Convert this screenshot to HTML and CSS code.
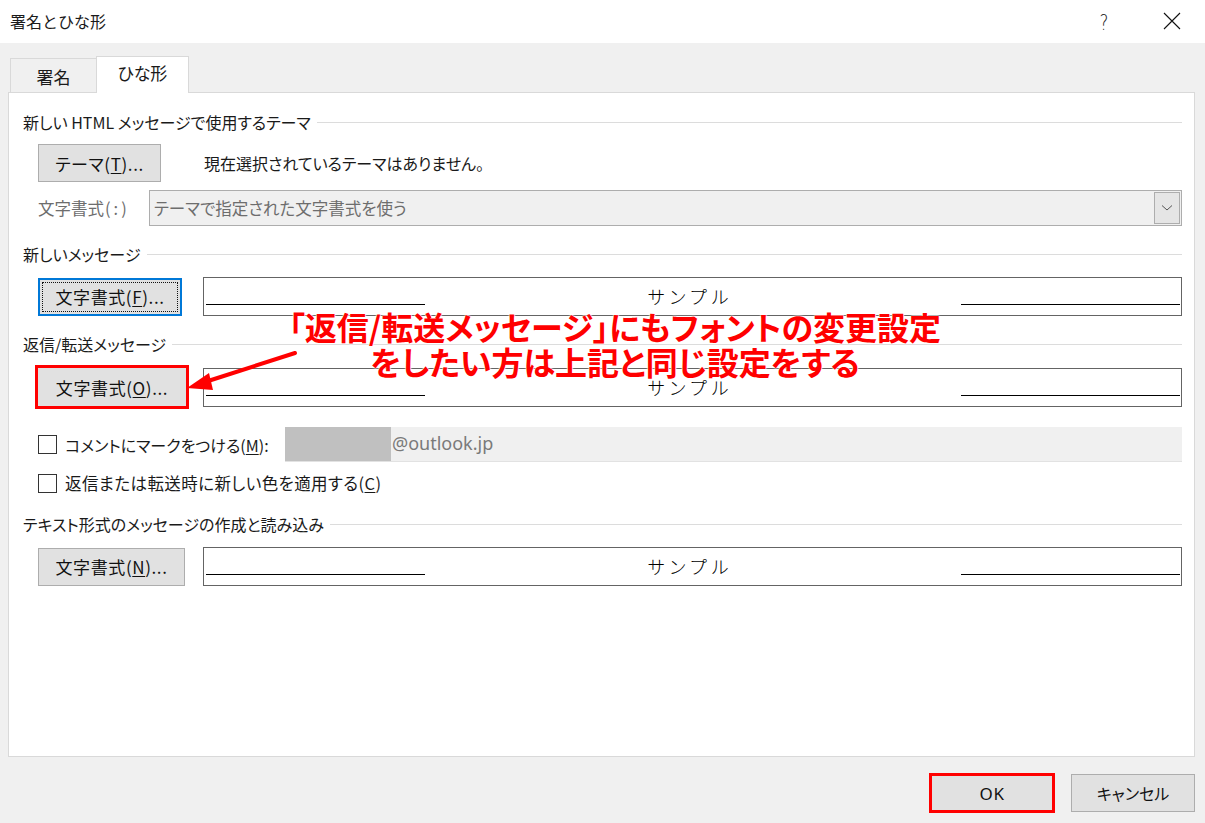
FILE: index.html
```html
<!DOCTYPE html>
<html lang="ja">
<head>
<meta charset="utf-8">
<title>署名とひな形</title>
<link rel="stylesheet" href="styles.css">
</head>
<body>
<div class="window">
  <div class="titlebar">
    <div class="title">署名とひな形</div>
    <div class="help">?</div>
    <div class="close">
      <svg width="18" height="18" viewBox="0 0 18 18"><path d="M1 1L17 17M17 1L1 17" stroke="#111" stroke-width="1.1" fill="none"/></svg>
    </div>
  </div>
  <div class="main">
    <div class="tabs">
      <div class="tab">署名</div>
      <div class="tab active">ひな形</div>
    </div>
    <div class="panel">
      <div class="group-title g1"><span>新しい HTML メッセージで使用するテーマ</span></div>
      <div class="row r-theme">
        <button class="btn btn-theme">テーマ(<u>T</u>)...</button>
        <div class="theme-text">現在選択されているテーマはありません。</div>
      </div>
      <div class="row r-font">
        <div class="disabled-label">文字書式<span class="paren">(:)</span></div>
        <div class="select">
          <span class="select-text">テーマで指定された文字書式を使う</span>
          <span class="select-btn"><svg width="12" height="8" viewBox="0 0 12 8"><path d="M1 1.5L6 6L11 1.5" stroke="#555" stroke-width="1" fill="none"/></svg></span>
        </div>
      </div>

      <div class="group-title g2"><span>新しいメッセージ</span></div>
      <div class="row r-sample">
        <button class="btn btn-font focused"><span class="focus-ring">文字書式(<u>F</u>)...</span></button>
        <div class="sample"><span class="sline"></span><span class="stext">サンプル</span><span class="sline"></span></div>
      </div>

      <div class="group-title g3"><span>返信/転送メッセージ</span></div>
      <div class="row r-sample">
        <button class="btn btn-font marked">文字書式(<u>O</u>)...</button>
        <div class="sample"><span class="sline"></span><span class="stext">サンプル</span><span class="sline"></span></div>
      </div>

      <div class="row r-check1">
        <span class="cbox"></span>
        <span class="clabel">コメントにマークをつける(<u>M</u>):</span>
        <div class="mark-input"><span class="mask"></span><span class="mail">@outlook.jp</span></div>
      </div>
      <div class="row r-check2">
        <span class="cbox"></span>
        <span class="clabel wide">返信または転送時に新しい色を適用する(<u>C</u>)</span>
      </div>

      <div class="group-title g4"><span>テキスト形式のメッセージの作成と読み込み</span></div>
      <div class="row r-sample r-last">
        <button class="btn btn-font">文字書式(<u>N</u>)...</button>
        <div class="sample"><span class="sline"></span><span class="stext">サンプル</span><span class="sline"></span></div>
      </div>

      <div class="annotation">
        <div class="note">
          <div>「返信/転送メッセージ」にもフォントの変更設定</div>
          <div>をしたい方は上記と同じ設定をする</div>
        </div>
        <svg class="arrow" width="130" height="50" viewBox="0 0 130 50">
          <path d="M112 5L22 34" stroke="#f00" stroke-width="4" fill="none" stroke-linecap="round"/>
          <path d="M4 40L26 25L30 42Z" fill="#f00"/>
        </svg>
      </div>
    </div>
    <div class="footer">
      <button class="btn btn-ok">OK</button>
      <button class="btn btn-cancel">キャンセル</button>
    </div>
  </div>
</div>
</body>
</html>
```

FILE: styles.css
```css
* { box-sizing: border-box; }
html, body { margin: 0; padding: 0; }
body {
  width: 1205px;
  height: 823px;
  overflow: hidden;
  background: #f0f0f0;
  font-family: "Noto Sans CJK JP", "Noto Sans", sans-serif;
  font-feature-settings: "palt";
  font-size: 16px;
  color: #1a1a1a;
}
.window { width: 1205px; height: 823px; display: flex; flex-direction: column; }
.titlebar {
  height: 43px;
  background: #fff;
  display: flex;
  align-items: center;
  padding-left: 10px;
}
.title { font-size: 16px; flex: 1; padding-bottom: 2px; font-feature-settings: normal; }
.help {
  width: 20px;
  text-align: center;
  font-size: 21px;
  line-height: 24px;
  font-family: "DejaVu Sans", sans-serif;
  font-weight: 300;
  color: #222;
  margin-right: 49px;
  margin-top: 2px;
  transform: scaleX(0.8);
}
.close { width: 18px; height: 18px; margin-right: 24px; margin-bottom: 2px; }
.close svg { display: block; }

.main { flex: 1; padding: 13px 10px 0 8px; display: flex; flex-direction: column; }
.tabs { display: flex; align-items: flex-end; height: 36px; padding-left: 2px; position: relative; z-index: 2; }
.tab {
  width: 86px;
  height: 34px;
  border: 1px solid #d9d9d9;
  border-bottom: none;
  border-right: none;
  display: flex;
  align-items: center;
  justify-content: center;
  font-size: 17px;
  background: #f0f0f0;
  padding-top: 2px;
}
.tab.active {
  width: 93px;
  height: 37px;
  background: #fff;
  border-right: 1px solid #d9d9d9;
  margin-bottom: -1px;
  padding-top: 0;
  padding-bottom: 5px;
}
.panel {
  position: relative;
  width: 1187px;
  height: 665px;
  background: #fff;
  border: 1px solid #d9d9d9;
  padding: 19px 12px 0 14px;
  display: flex;
  flex-direction: column;
}
.group-title {
  display: flex;
  align-items: center;
  height: 20px;
  line-height: 20px;
  white-space: nowrap;
}
.group-title::after {
  content: "";
  flex: 1;
  height: 1px;
  background: #dcdcdc;
  margin-left: 6px;
}
.g2, .g3 { margin-top: 18px; }
.g4 { margin-top: 19px; }

.row { display: grid; grid-template-columns: 165px 1fr; align-items: center; padding-left: 15px; }
.r-theme { margin-top: 12px; height: 38px; }
.r-font { margin-top: 8px; height: 36px; grid-template-columns: 111px 1fr; }
.r-sample { margin-top: 13px; height: 39px; }

.btn {
  font-family: "Noto Sans CJK JP", "Noto Sans", sans-serif;
  font-feature-settings: "palt";
  font-size: 17px;
  letter-spacing: 0.6px;
  color: #111;
  background: #e1e1e1;
  border: 1px solid #adadad;
  padding: 0;
  margin: 0;
  height: 38px;
  display: flex;
  align-items: center;
  justify-content: center;
}
.btn u { text-decoration-thickness: 1px; text-underline-offset: 2px; }
.btn-theme { width: 123px; }
.theme-text { padding-left: 1px; }
.btn-font { width: 147px; height: 38px; }
.btn-font.focused { width: 144px; border: 2px solid #0078d7; }
.focus-ring {
  display: flex;
  align-items: center;
  justify-content: center;
  width: calc(100% - 4px);
  height: calc(100% - 4px);
  border: 1px dotted #111;
}
.btn-font.marked {
  width: 150px;
  margin-left: -1px;
  outline: 3px solid #f00;
  outline-offset: -1px;
  height: 40px;
}

.disabled-label { color: #6d6d6d; font-size: 16.5px; }
.paren { letter-spacing: 3px; margin-left: 1px; }
.select {
  height: 36px;
  background: #f0f0f0;
  border: 1px solid #adadad;
  display: flex;
  align-items: center;
  padding: 0 1px 0 4px;
}
.select-text { flex: 1; color: #6d6d6d; font-size: 16.5px; }
.select-btn {
  width: 26px;
  height: 32px;
  background: #e5e5e5;
  border: 1px solid #adadad;
  display: flex;
  align-items: center;
  justify-content: center;
}

.sample {
  height: 39px;
  border: 1px solid #646464;
  display: flex;
  align-items: flex-start;
  padding: 0 1px 0 2px;
}
.sline { width: 219px; height: 1px; background: #000; margin-top: 26px; flex: none; }
.stext {
  flex: 1;
  text-align: center;
  font-size: 18px;
  letter-spacing: 5px;
  line-height: 22px;
  padding-top: 7px;
  padding-right: 5px;
  font-weight: 300;
  color: #000;
}

.r-check1 { display: flex; margin-top: 21px; height: 35px; }
.r-check2 { display: flex; margin-top: 9px; height: 24px; }
.cbox {
  width: 19px;
  height: 19px;
  border: 1px solid #333;
  background: #fff;
  flex: none;
  margin-right: 8px;
}
.clabel { white-space: nowrap; }
.clabel.wide { font-size: 16.5px; letter-spacing: 0.4px; }
.clabel u { text-decoration-thickness: 1px; text-underline-offset: 2px; }
.mark-input {
  margin-left: auto;
  width: 897px;
  height: 35px;
  background: #f0f0f0;
  border-bottom: 1px solid #e2e2e2;
  display: flex;
  align-items: stretch;
}
.mask { width: 106px; background: #c0c0c0; }
.mail {
  font-family: "Noto Sans", sans-serif;
  font-size: 18px;
  color: #7a7a7a;
  display: flex;
  align-items: center;
  padding-left: 1px;
  padding-bottom: 3px;
}

.footer {
  display: flex;
  justify-content: flex-end;
  gap: 16px;
  padding-top: 16px;
}
.btn-ok {
  width: 126px;
  height: 40px;
  border: 3px solid #f00;
  font-family: "Noto Sans", sans-serif;
  font-size: 17px;
}
.btn-cancel {
  width: 124px;
  height: 38px;
  margin-top: 1px;
  font-size: 16px;
  letter-spacing: 0;
}

.annotation { position: absolute; left: 0; top: 0; width: 100%; height: 100%; pointer-events: none; }
.note {
  position: absolute;
  left: 200px;
  top: 216px;
  width: 812px;
  text-align: center;
  color: #f00;
  font-weight: 700;
  font-size: 32px;
  line-height: 35px;
  text-shadow: 0 0 2px #fff, 0 0 2px #fff, 0 0 1px #fff;
}
.arrow { position: absolute; left: 174px; top: 255px; }
```
